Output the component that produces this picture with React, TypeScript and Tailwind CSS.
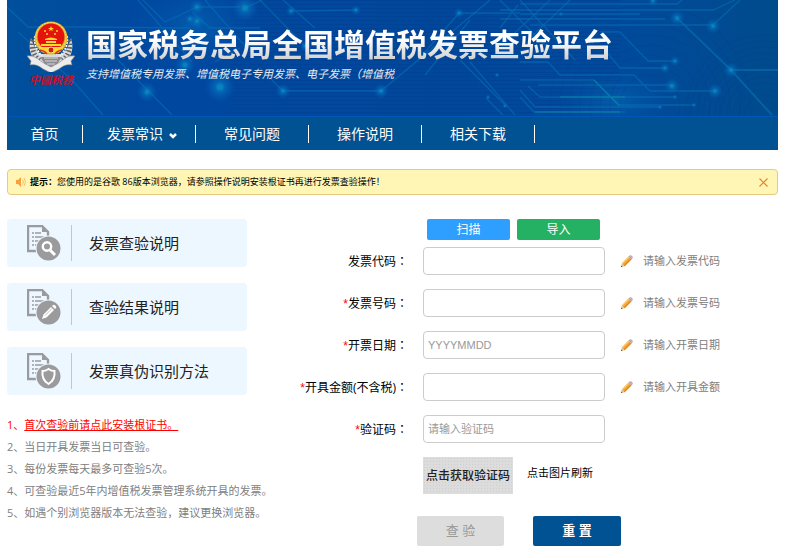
import React from "react";

const menu = ["首页", "发票常识", "常见问题", "操作说明", "相关下载"];

const guides = [
  { label: "发票查验说明", kind: "search" },
  { label: "查验结果说明", kind: "pencil" },
  { label: "发票真伪识别方法", kind: "shield" },
];

const notes = [
  "当日开具发票当日可查验。",
  "每份发票每天最多可查验5次。",
  "可查验最近5年内增值税发票管理系统开具的发票。",
  "如遇个别浏览器版本无法查验，建议更换浏览器。",
];

const fields = [
  { id: "code", label: "发票代码", required: false, placeholder: "", hint: "请输入发票代码" },
  { id: "number", label: "发票号码", required: true, placeholder: "", hint: "请输入发票号码" },
  { id: "date", label: "开票日期", required: true, placeholder: "YYYYMMDD", hint: "请输入开票日期" },
  { id: "amount", label: "开具金额(不含税)", required: true, placeholder: "", hint: "请输入开具金额" },
  { id: "captcha", label: "验证码", required: true, placeholder: "请输入验证码", hint: "" },
];

const nodes = [
  [197, 7, 3], [197, 21, 3], [190, 19, 2], [245, 8, 5], [220, 87, 6], [147, 92, 4], [185, 65, 4],
  [283, 91, 3], [381, 91, 3], [291, 11, 2], [356, 10, 2], [677, 18, 3], [713, 26, 3], [731, 70, 3],
  [665, 68, 2], [675, 61, 2], [672, 86, 3], [715, 91, 3], [459, 13, 2], [497, 75, 1], [488, 97, 1],
  [505, 106, 1], [660, 107, 1], [694, 105, 1], [675, 97, 1], [653, 1, 2], [561, 14, 1], [305, 46, 2],
];

function Circuit() {
  return (
    <svg
      className="absolute inset-0 h-full w-full"
      viewBox="7 0 771 116"
      preserveAspectRatio="xMidYMid slice"
      aria-hidden="true"
    >
      <defs>
        <linearGradient id="sky" x1="0" x2="1" y1="0" y2="0">
          <stop offset="0" stopColor="#00509c" />
          <stop offset="0.2" stopColor="#0047a0" />
          <stop offset="0.55" stopColor="#00479c" />
          <stop offset="0.8" stopColor="#004a9c" />
          <stop offset="1" stopColor="#004b8c" />
        </linearGradient>
        <radialGradient id="glow">
          <stop offset="0" stopColor="#0b93c9" stopOpacity="0.8" />
          <stop offset="0.4" stopColor="#0778c2" stopOpacity="0.5" />
          <stop offset="1" stopColor="#0560c0" stopOpacity="0" />
        </radialGradient>
        <pattern id="scan" width="8" height="4" patternUnits="userSpaceOnUse">
          <path d="M0 .5H8" stroke="#003a86" strokeOpacity=".3" />
        </pattern>
      </defs>
      <rect x="7" width="771" height="116" fill="url(#sky)" />
      <rect x="230" width="390" height="116" fill="url(#scan)" />
      <ellipse cx="195" cy="25" rx="70" ry="45" fill="url(#glow)" opacity=".35" />
      <ellipse cx="615" cy="100" rx="60" ry="28" fill="url(#glow)" opacity=".35" />
      <g fill="none" stroke="#003e88" strokeOpacity=".3">
        {[14, 20, 26, 32, 38, 44, 50, 56, 62, 68, 74, 80].map((r) => (
          <circle key={r} cx="765" cy="115" r={r} />
        ))}
        {[30, 40, 50, 60, 70, 80, 90, 100].map((r) => (
          <circle key={r} cx="650" cy="105" r={r} />
        ))}
      </g>
      <g fill="none" stroke="#0878b8" strokeOpacity=".5" strokeWidth="1.3">
        <path d="M7 7 28 27H85L190 28M72 80 103 115M18 32 72 80M138 0 192 62M197 7 165 22 143 0M197 7 240 7M192 12 210 28H260M205 0 245 46M245 8 262 0M110 52 172 115M215 62 240 48" />
        <path d="M260 0 305 46M283 0 315 28M291 11 356 10M260 68 283 91H381L490 0" />
        <path d="M459 13 418 60M459 13H520M470 20 425 75M518 5 500 28M550 0 505 42M570 0 530 38M500 0 550 50M520 0 575 60M470 62 515 115M460 60 506 106M486 98 503 115" />
        <path d="M520 4H677L682 0M500 10H713L735 0M520 14H640M500 19H665M530 25H713L740 0M600 32H620L648 61H675M605 50 620 68H665M520 62H548L560 75H634L650 91H715M520 80H594L618 105H694M528 86 540 97H675M538 85H672M520 90 535 107H660M520 97 534 112H625" />
        <path d="M677 18 731 70H778M731 70 772 115" strokeWidth="2" />
      </g>
      <path d="M560 97H625M535 112H620M594 80 620 106" fill="none" stroke="#0794a8" strokeOpacity=".5" strokeWidth="1.4" />
      {nodes.map(([x, y, r], i) => (
        <g key={i}>
          <circle cx={x} cy={y} r={r * 2.6} fill="url(#glow)" />
          <circle cx={x} cy={y} r={r * 0.6} fill="#0a8fbd" fillOpacity=".45" />
        </g>
      ))}
    </svg>
  );
}

function Emblem() {
  return (
    <svg className="h-[51px] w-12" viewBox="0 0 48 51" aria-hidden="true">
      <path d="M4 17C0 29 5 39 13 43l11 8 11-8c8-4 13-14 9-26-3 10-6 14-9 16H13C10 30 7 26 4 17Z" fill="#d9dadd" />
      <path d="M6 19c-2 9 1 16 7 21M42 19c2 9-1 16-7 21" fill="none" stroke="#62615f" strokeWidth="5" strokeDasharray="1.5 2" />
      <path d="M8 15c-1 9 2 15 7 20M40 15c1 9-2 15-7 20" fill="none" stroke="#f1f1f1" strokeWidth="2" strokeDasharray="2 1" />
      <path d="M0 35c7-1 11 3 15 6l9 5 9-5c4-3 8-7 15-6l-4 5 1 4c-6-1-9 1-13 4l-8 4-8-4c-4-3-7-5-13-4l1-4Z" fill="#ececec" stroke="#817e7b" strokeWidth=".6" />
      <path d="M13 36h22l-5 7-6 3-6-3Z" fill="#8b8c90" />
      <path d="M17 37h14M18 40h12M20 43h8" stroke="#ececec" strokeWidth=".8" />
      <ellipse cx="24" cy="17" rx="16.5" ry="16.5" fill="#e5b22d" />
      <ellipse cx="24" cy="16.5" rx="15" ry="15" fill="none" stroke="#fae57c" strokeDasharray="2 1" />
      <circle cx="24" cy="16" r="13.5" fill="#e6120d" />
      <path d="m24 5 .8 2H27l-1.8 1.3.7 2L24 9l-1.9 1.3.7-2L21 7h2.2Z" fill="#ffdc32" />
      <g fill="#ffd632">
        <circle cx="18" cy="10" r="1" />
        <circle cx="30" cy="10" r="1" />
        <circle cx="20" cy="13" r="1" />
        <circle cx="28" cy="13" r="1" />
        <path d="M18 18q6-3 12 0v1H18ZM19 20h10v2H19ZM14 23h20v2H14Z" />
        <path d="M12 26h24c-1 4-4 6-7 6H19c-3 0-6-2-7-6Z" />
      </g>
      <circle cx="24" cy="29" r="3" fill="#c92413" stroke="#ffe269" />
      <path d="M13 29q5 1 7 4M35 29q-5 1-7 4" fill="none" stroke="#d93817" strokeWidth="1.4" />
    </svg>
  );
}

function GuideIcon({ kind }: { kind: string }) {
  return (
    <svg className="h-9 w-[34px]" viewBox="0 0 34 36" aria-hidden="true">
      <path d="M9 26H1V1h14l6 6v7" fill="none" stroke="#9b9b9e" strokeWidth="2.4" />
      <path d="M15 0v7h7Z" fill="#9b9b9e" />
      <path d="M5 8h2m1 0h6M5 12h2m1 0h9M5 16h2m1 0h6M5 20h2m1 0h2" stroke="#9b9b9e" strokeWidth="1.7" />
      <circle cx="21.5" cy="23.5" r="13" fill="#ecf7ff" />
      <circle cx="21.5" cy="23.5" r="12" fill="#9b9b9e" />
      {kind === "search" && (
        <g fill="none" stroke="#fff" strokeWidth="2.4">
          <circle cx="20" cy="21.5" r="4.2" />
          <path d="m23 25 5 5" strokeWidth="3" />
        </g>
      )}
      {kind === "pencil" && (
        <g fill="#fff">
          <path d="m15 30 1.5-4.5L24 18l3 3-7.5 7.5Z" />
          <path d="m25 17 1-1q1-.7 2 .3l.7.7q1 1 .3 2l-1 1Z" />
          <path d="m18 26.5 7-7" stroke="#9b9b9e" strokeWidth=".6" />
        </g>
      )}
      {kind === "shield" && (
        <path d="M21.5 16q3 2 6 2 1 9-6 13-7-4-6-13 3 0 6-2Z" fill="#9b9b9e" stroke="#fff" strokeWidth="2" />
      )}
    </svg>
  );
}

function Pencil() {
  return (
    <svg className="h-3 w-3 shrink-0" viewBox="0 0 12 12" aria-hidden="true">
      <path d="M.8 8.400 7.600 1.600 10.400 4.400 3.600 11.200Z" fill="#f5a32c" />
      <path d="M.8 8.400 7.600 1.600 8.500 2.500 1.700 9.300Z" fill="#ffc567" />
      <path d="M2.900 10.500 9.700 3.700 10.400 4.400 3.600 11.200Z" fill="#d2822a" />
      <path d="M.8 8.400 0 12 3.600 11.200Z" fill="#e0bd92" />
      <path d="M.3 10.500 0 12 1.500 11.700Z" fill="#51453c" />
      <path d="M7.600 1.600 8.600.6 11.400 3.400 10.400 4.400Z" fill="#a9a9ad" />
      <path d="M8.600.6Q9.700-.3 11 1T11.400 3.400Z" fill="#c79abd" />
    </svg>
  );
}

export default function App() {
  return (
    <div className="bg-white px-[7px] pb-3 font-['Open_Sans','Noto_Sans_CJK_SC',sans-serif] text-xs text-black">
      <header className="relative flex h-[116px] overflow-hidden bg-[#00479c]">
        <Circuit />
        <div className="relative flex gap-[10px] pt-[21px] pl-[19px]">
          <div className="flex w-[50px] flex-col items-center">
            <Emblem />
            <span className="text-[11px] leading-4 font-bold whitespace-nowrap text-[#c8101e] italic">中國税務</span>
          </div>
          <div>
            <h1 className="bg-gradient-to-b from-white from-40% to-[#d5d5d5] to-80% bg-clip-text text-[31px] leading-[46px] font-bold whitespace-nowrap text-transparent">
              国家税务总局全国增值税发票查验平台
            </h1>
            <p className="text-[11px] leading-[14px] whitespace-nowrap text-[#e4e8ee] italic">
              支持增值税专用发票、增值税电子专用发票、电子发票（增值税
            </p>
          </div>
        </div>
      </header>

      <nav className="flex h-[34px] items-center border-t border-[#0057b8] bg-[#005293] text-sm text-white">
        {menu.map((item, i) => (
          <a
            key={item}
            href="#"
            className="flex h-[18px] w-[113px] items-center justify-center border-r border-white whitespace-nowrap first:w-[76px]"
          >
            {item}
            {i === 1 && (
              <svg className="mt-1 ml-1 -mr-2 h-2 w-3" viewBox="0 0 12 8" aria-hidden="true">
                <path d="m3 2 3 3 3-3" fill="none" stroke="#fff" strokeWidth="2.5" />
              </svg>
            )}
          </a>
        ))}
      </nav>

      <div className="mt-[19px] flex h-[26px] items-center rounded border border-[#e8c981] bg-[#fff6b5] px-2 text-[9px]">
        <svg className="mr-1 h-[10px] w-[10px]" viewBox="0 0 10 10" aria-hidden="true">
          <path d="M0 3h2l3-3v10L2 7H0Z" fill="#f8a13a" />
          <path d="M6.5 2.5q2 2.5 0 5M8 1q3 4 0 8" fill="none" stroke="#fbbd6c" />
        </svg>
        <p className="flex-1">
          <b>提示：</b>您使用的是谷歌 86版本浏览器，请参照操作说明安装根证书再进行发票查验操作！
        </p>
        <button type="button" aria-label="关闭" className="flex h-4 w-[10px] items-center">
          <svg className="h-[9px] w-[9px]" viewBox="0 0 9 9" aria-hidden="true">
            <path d="m.5.5 8 8m0-8-8 8" stroke="#e5842c" strokeWidth="1.2" />
          </svg>
        </button>
      </div>

      <main className="mt-6 flex">
        <aside className="w-60 shrink-0">
          <div className="flex flex-col gap-4">
            {guides.map((g) => (
              <a key={g.kind} href="#" className="flex h-12 items-center rounded bg-[#ecf7ff] pl-5 text-[15px] text-[#222]">
                <GuideIcon kind={g.kind} />
                <span className="mr-[17px] ml-[10px] h-9 w-px bg-[#c0c8ce]" />
                {g.label}
              </a>
            ))}
          </div>
          <ol className="mt-[19px] text-[11px] leading-[22px] whitespace-nowrap text-[#808080]">
            <li className="text-[#f00]">
              1、
              <a href="#" className="underline">
                首次查验前请点此安装根证书。
              </a>
            </li>
            {notes.map((n, i) => (
              <li key={n}>
                {i + 2}、{n}
              </li>
            ))}
          </ol>
        </aside>

        <form className="flex-1" onSubmit={(e) => e.preventDefault()}>
          <div className="flex gap-[7px] pl-[180px] text-white">
            <button type="button" className="h-[21px] w-[83px] rounded-xs bg-[#2f9fff]">
              扫描
            </button>
            <button type="button" className="h-[21px] w-[83px] rounded-xs bg-[#25b163]">
              导入
            </button>
          </div>
          <div className="mt-[7px] flex flex-col gap-[14px]">
            {fields.map((f) => (
              <div key={f.id} className="flex h-7 items-center">
                <label htmlFor={f.id} className="mr-[15px] w-[161px] text-right whitespace-nowrap">
                  {f.required && <span className="font-['Liberation_Sans',sans-serif] text-[#f00]">*</span>}
                  {f.label}
                  <span className="font-['Noto_Sans_CJK_TC',sans-serif]">：</span>
                </label>
                <input
                  id={f.id}
                  type="text"
                  placeholder={f.placeholder}
                  className="h-7 w-[182px] rounded border border-[#ccc] px-1 font-['Liberation_Sans','Noto_Sans_CJK_SC',sans-serif] text-[11px] placeholder:text-[#999]"
                />
                {f.hint && (
                  <span className="ml-4 flex items-center gap-[10px] text-[11px] whitespace-nowrap text-[#808080]">
                    <Pencil />
                    {f.hint}
                  </span>
                )}
              </div>
            ))}
          </div>
          <div className="mt-[14px] flex pl-44">
            <button
              type="button"
              className="h-[37px] w-[90px] bg-[#dcdcdc] bg-[radial-gradient(#cfcfcf_1px,transparent_1px)] bg-[length:3px_3px] font-medium whitespace-nowrap text-[#222]"
            >
              点击获取验证码
            </button>
            <span className="ml-[14px] text-[11px] leading-8">点击图片刷新</span>
          </div>
          <div className="mt-[22px] flex gap-[29px] pl-[170px] text-[13px]">
            <button type="submit" disabled className="h-[30px] w-[87px] rounded-xs bg-[#ddd] text-[#999]">
              查 验
            </button>
            <button type="reset" className="h-[30px] w-[88px] rounded-xs bg-[#005293] font-bold text-white">
              重 置
            </button>
          </div>
        </form>
      </main>
    </div>
  );
}
